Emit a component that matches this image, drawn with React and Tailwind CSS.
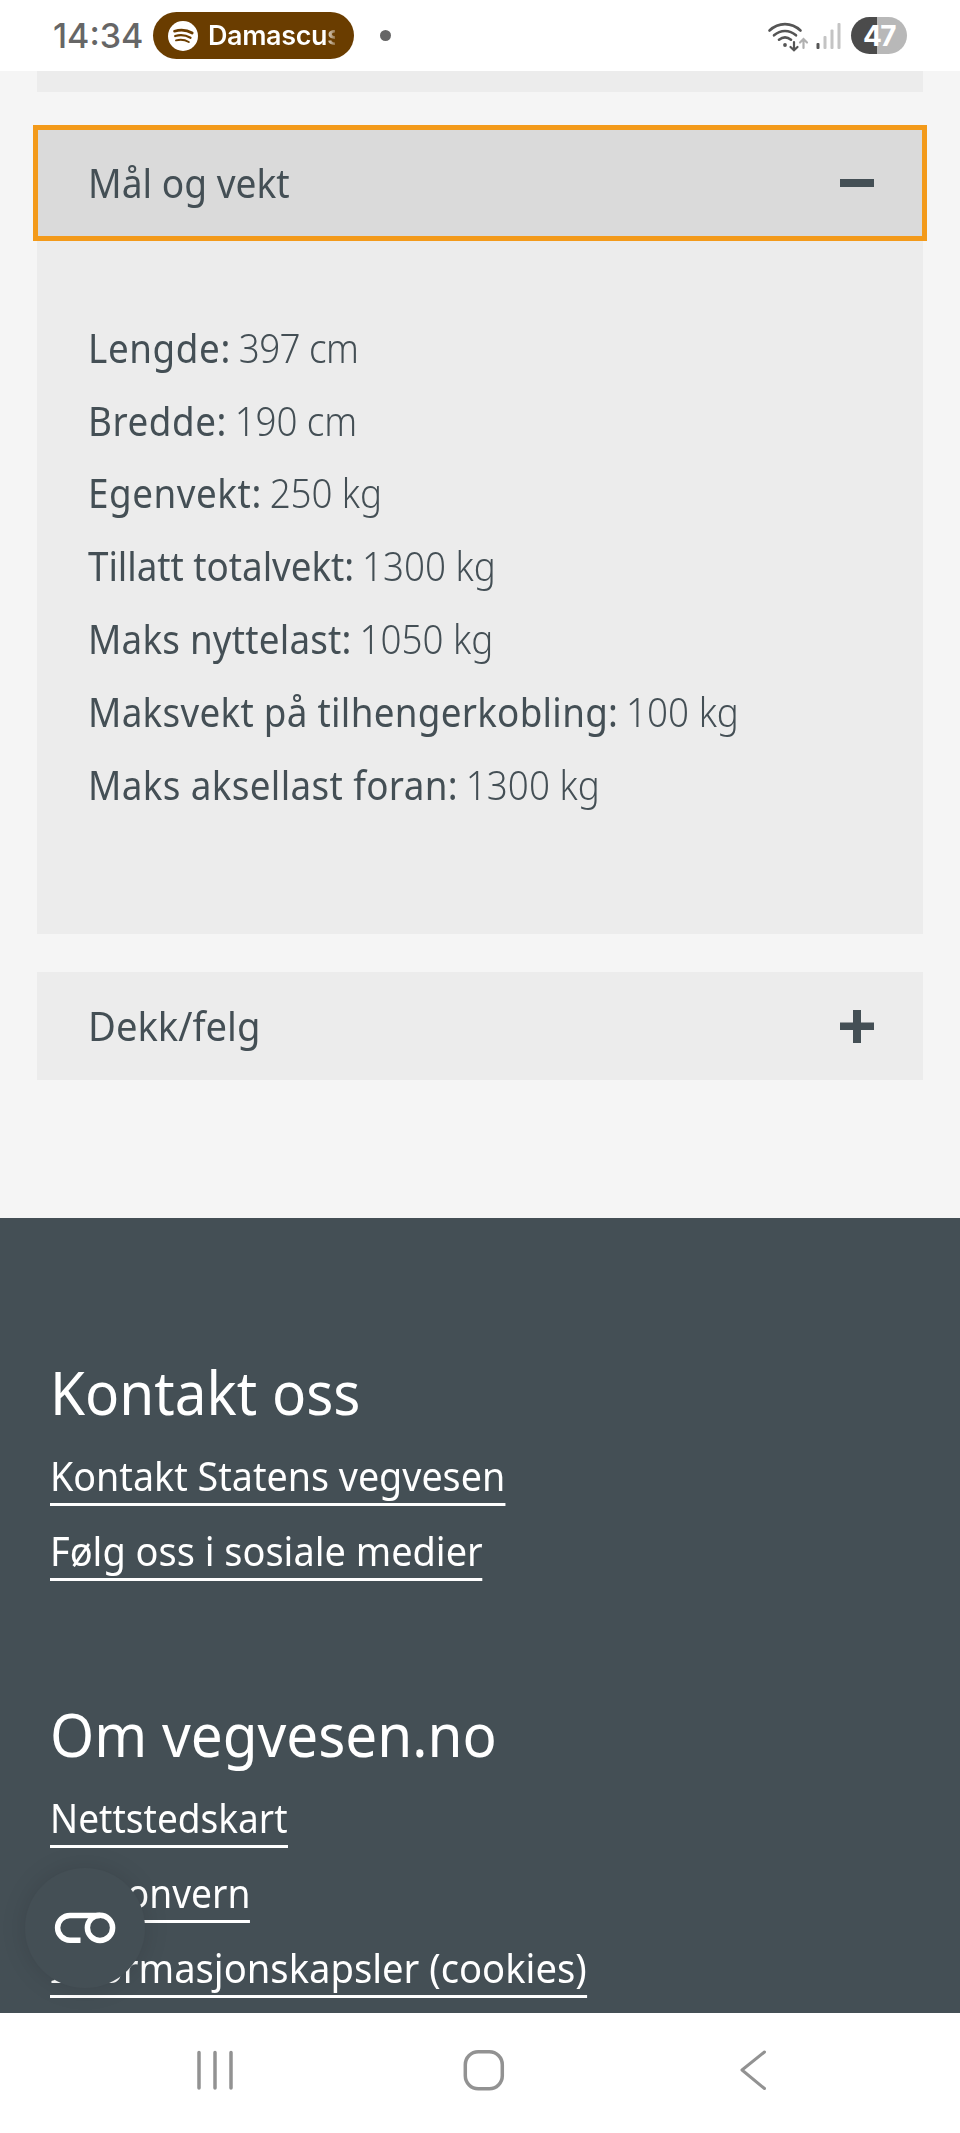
// measurements shown in the open accordion panel
const measurements = [
  { label: "Lengde:", value: "397 cm", labelClass: "tracking-[0.65px]", valueClass: "tracking-[-0.6px]" },
  { label: "Bredde:", value: "190 cm", labelClass: "tracking-[0.6px]", valueClass: "tracking-[-0.15px]" },
  { label: "Egenvekt:", value: "250 kg", labelClass: "tracking-[0.6px]", valueClass: "tracking-[-0.1px]" },
  { label: "Tillatt totalvekt:", value: "1300 kg", labelClass: "tracking-[-0.05px]", valueClass: "tracking-normal" },
  { label: "Maks nyttelast:", value: "1050 kg", labelClass: "tracking-[0.22px]", valueClass: "tracking-normal" },
  { label: "Maksvekt på tilhengerkobling:", value: "100 kg", labelClass: "tracking-[0.31px]", valueClass: "tracking-normal" },
  { label: "Maks aksellast foran:", value: "1300 kg", labelClass: "tracking-[0.4px]", valueClass: "tracking-normal" },
];

const contactLinks = [
  { text: "Kontakt Statens vegvesen", className: "scale-x-[0.941]" },
  { text: "Følg oss i sosiale medier", className: "scale-x-[0.948]" },
];

const aboutLinks = [
  { text: "Nettstedskart", className: "scale-x-[0.926]" },
  { text: "Personvern", className: "scale-x-[0.93]" },
  { text: "Informasjonskapsler (cookies)", className: "scale-x-[0.954]" },
];

const SpotifyIcon = () => (
  <svg width="30" height="30" viewBox="0 0 30 30" fill="none">
    <circle cx="15" cy="15" r="15" fill="#fff" />
    <g stroke="#6a3d00" strokeLinecap="round">
      <path d="M6.500 10.200C12 8.600 19 9 24.200 12" strokeWidth="2.700" />
      <path d="M7.200 15C12 13.700 18 14.200 22.500 16.700" strokeWidth="2.300" />
      <path d="M8 19.400C12 18.400 17 18.800 20.800 21" strokeWidth="1.900" />
    </g>
  </svg>
);

const WifiIcon = () => (
  <svg width="42" height="32" viewBox="0 0 42 32" fill="none" strokeLinecap="round">
    <g stroke="#555" strokeWidth="2.600">
      <path d="M2.500 10.500C11.500 2 24.500 2 33.500 10.500" />
      <path d="M7 15.300C13.500 9.500 22.500 9.500 29 15.300" />
      <path d="M12 19.700C15.800 16.700 20.200 16.700 24 19.700" />
    </g>
    <circle cx="18" cy="25" r="1.900" fill="#555" />
    <path d="M27 22V30M23.500 27L27 30.300L30.500 27" stroke="#555" strokeWidth="2.200" />
    <path d="M36.500 28V19.500M33 22.500L36.500 19L40 22.500" stroke="#b0b0b0" strokeWidth="2.200" />
  </svg>
);

const StatusBar = () => (
  <div className="flex h-[71px] shrink-0 items-center bg-white pl-[53px] pr-[53px]">
    <span className="w-[100px] whitespace-nowrap font-['Inter',sans-serif] text-[34px] font-medium leading-none text-[#666]">
      14:34
    </span>
    <div className="flex h-[47px] w-[201px] items-center rounded-full bg-[#6a3d00] pl-[15px]">
      <SpotifyIcon />
      <span className="ml-[10px] w-[127px] overflow-hidden whitespace-nowrap bg-linear-to-r from-white from-92% to-white/30 bg-clip-text font-['Inter',sans-serif] text-[27px] font-semibold leading-[36px] tracking-[-0.4px] text-transparent">
        Damascus
      </span>
    </div>
    <div className="ml-[26px] size-[11px] rounded-full bg-[#666]" />
    <div className="ml-auto flex items-center">
      <WifiIcon />
      <svg className="ml-[7px]" width="26" height="26" viewBox="0 0 26 26">
        <rect x="0.500" y="20" width="3" height="6" rx="1" fill="#555" />
        <rect x="7.500" y="13" width="3" height="13" rx="1" fill="#c4c4c4" />
        <rect x="14.500" y="6.500" width="3" height="19.500" rx="1" fill="#c4c4c4" />
        <rect x="21.500" y="0" width="3" height="26" rx="1" fill="#c4c4c4" />
      </svg>
      <div className="ml-[9px] flex h-[37px] w-[56px] items-center justify-center rounded-full bg-linear-to-r from-[#4b4b4b] from-46% to-[#b8b8b8] to-46% font-['Inter',sans-serif] text-[28px] font-bold leading-none tracking-[-1.5px] text-white">
        47
      </div>
    </div>
  </div>
);

const Accordion = () => (
  <main className="h-[1147px] shrink-0 px-[37px]">
    {/* Bottom edge of the previous section */}
    <div className="h-[21px] bg-[#ececec]" />

    {/* Open section */}
    <button
      type="button"
      className="mt-[37px] flex h-[108px] w-full items-center justify-between bg-[#dadada] pl-[51px] pr-[49px] outline-5 -outline-offset-1 outline-[#f39a1a]"
    >
      <span className="origin-left scale-x-[0.928] text-[40px] leading-[54px]">Mål og vekt</span>
      <span className="h-[8px] w-[34px] bg-[#444f55]" />
    </button>
    <dl className="h-[697px] bg-[#ececec] pl-[51px] pt-[74.5px]">
      {measurements.map((item) => (
        <div
          key={item.label}
          className="flex h-[72.8px] origin-left scale-x-92 items-center gap-[8.5px] whitespace-nowrap text-[40px]"
        >
          <dt className={`font-[450] ${item.labelClass}`}>{item.label}</dt>
          <dd className={`font-light ${item.valueClass}`}>{item.value}</dd>
        </div>
      ))}
    </dl>

    {/* Closed section */}
    <button
      type="button"
      className="mt-[38px] flex h-[108px] w-full items-center justify-between bg-[#ececec] pl-[51px] pr-[49px]"
    >
      <span className="origin-left scale-x-[0.955] text-[40px] leading-[54px]">Dekk/felg</span>
      <svg width="34" height="34" viewBox="0 0 34 34" fill="#444f55">
        <path d="M13 1H21V13.500H34V21H21V34H13V21H0V13.500H13Z" />
      </svg>
    </button>
  </main>
);

const FooterLinks = ({ links }) => (
  <ul className="flex flex-col items-start">
    {links.map((link) => (
      <li key={link.text} className="h-[75px]">
        <a
          href="#"
          className={`block h-[53px] origin-left whitespace-nowrap border-b-3 border-white text-[40px] leading-[46px] ${link.className}`}
        >
          {link.text}
        </a>
      </li>
    ))}
  </ul>
);

const CookieButton = () => (
  <button
    type="button"
    className="absolute bottom-[25px] left-[25px] flex size-[120px] items-center justify-center rounded-full bg-[#444f55] pr-[1px] shadow-[0_0_26px_rgba(0,0,0,0.12)]"
  >
    <svg width="62" height="32" viewBox="0 0 62 32" fill="none" stroke="#fff" strokeWidth="5.500">
      <path d="M26.500 28.200H16A12.400 12.400 0 0 1 16 3.400H46" />
      <circle cx="46" cy="15.800" r="12.600" />
    </svg>
  </button>
);

const Footer = () => (
  <footer className="relative h-[795px] shrink-0 overflow-hidden bg-[#444f55] pl-[50px] pt-[134px] text-white">
    <h2 className="h-[101px] origin-left scale-x-[0.944] text-[60px] leading-[80px]">Kontakt oss</h2>
    <FooterLinks links={contactLinks} />
    <h2 className="mt-[91px] h-[101px] origin-left scale-x-[0.944] text-[60px] leading-[80px]">Om vegvesen.no</h2>
    <FooterLinks links={aboutLinks} />
    <CookieButton />
  </footer>
);

const NavigationBar = () => (
  <nav className="flex h-[120px] shrink-0 items-start justify-between bg-white pl-[197px] pr-[193px] pt-[36px]">
    <svg width="36" height="42" viewBox="0 0 36 42" stroke="#929292" strokeWidth="3.500" strokeLinecap="round">
      <path d="M2 3.500V39M18 3.500V39M34 3.500V39" />
    </svg>
    <svg className="mr-[5px]" width="42" height="42" viewBox="0 0 42 42" fill="none" stroke="#929292" strokeWidth="3.500">
      <rect x="2.300" y="2.800" width="37" height="37" rx="13" />
    </svg>
    <svg width="28" height="42" viewBox="0 0 28 42" fill="none" stroke="#929292" strokeWidth="3" strokeLinecap="round" strokeLinejoin="round">
      <path d="M25.500 3L3 21L25.500 39.500" />
    </svg>
  </nav>
);

const App = () => {
  return (
    <div className="flex h-[2133px] w-[960px] flex-col overflow-hidden bg-[#f5f5f5] font-['Noto_Sans','Open_Sans',sans-serif] text-[#444f55]">
      <StatusBar />
      <Accordion />
      <Footer />
      <NavigationBar />
    </div>
  );
};

export default App;
